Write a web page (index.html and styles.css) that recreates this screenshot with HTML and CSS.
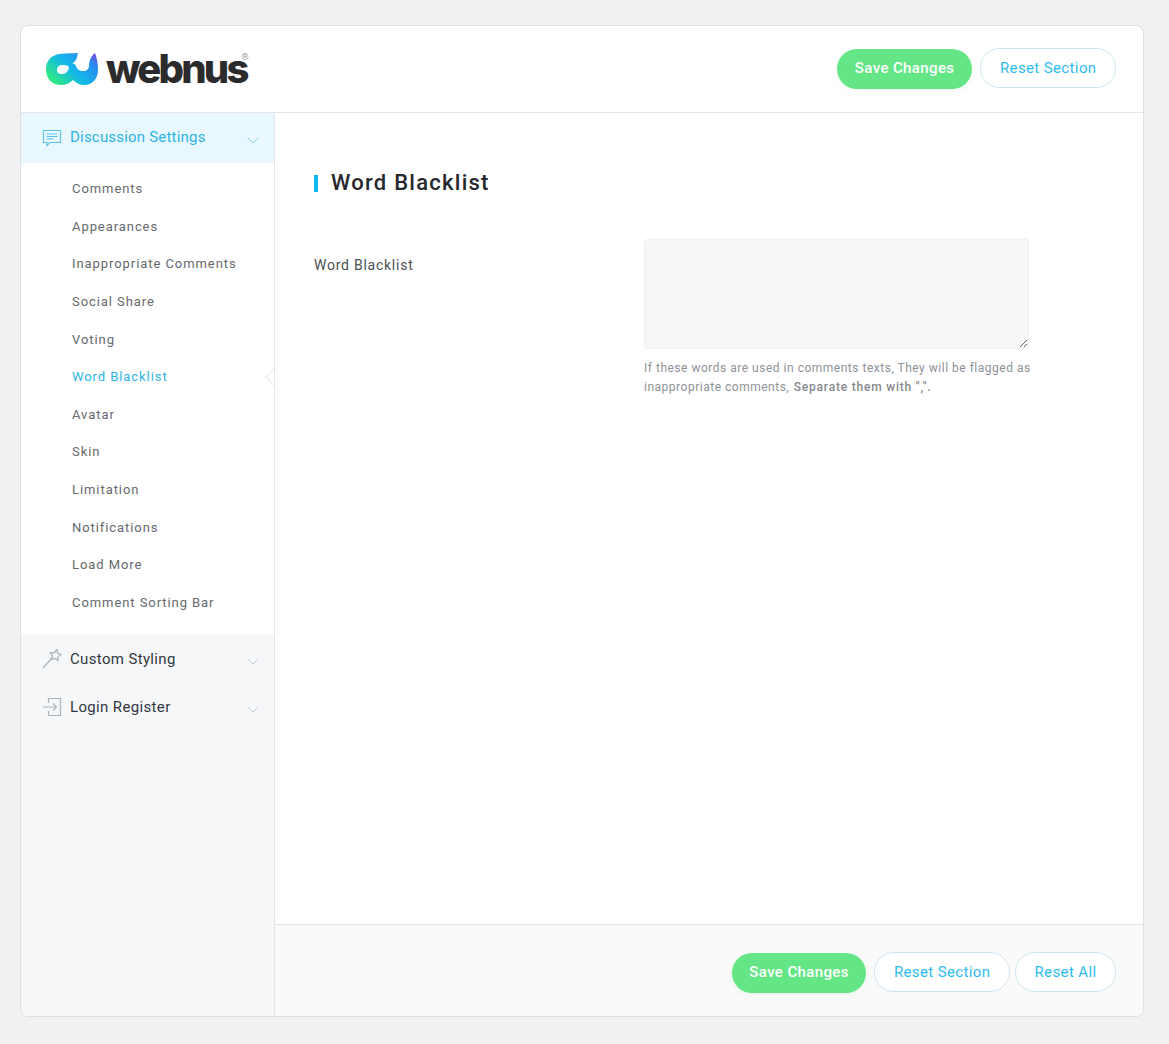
FILE: index.html
```html
<!DOCTYPE html>
<html lang="en">
<head>
    <meta charset="UTF-8">
    <meta name="viewport" content="width=device-width, initial-scale=1.0">
    <title>Word Blacklist</title>
    <link rel="stylesheet" href="styles.css">
</head>
<body>
    <div class="panel">
        <header class="panel-header">
            <div class="logo">
                <svg class="logo-mark" width="52" height="32" viewBox="0 0 52 32">
                    <defs>
                        <linearGradient id="markGrad" x1="0" y1="0.6" x2="0.96" y2="0">
                            <stop offset="0" stop-color="#2ee68a"/>
                            <stop offset="0.4" stop-color="#12b8e8"/>
                            <stop offset="0.8" stop-color="#2a8cf0"/>
                            <stop offset="1" stop-color="#7a3de8"/>
                        </linearGradient>
                    </defs>
                    <path fill="url(#markGrad)" fill-rule="evenodd" d="M32 0C24 .5 20 0 14 1 5 2 0 8 0 16c0 10 6 16 15 16 5 0 9-2 12-5 3 3 7 5 11 5 8 0 14-6 14-15 0-6-1-12-3-17-4 3-6 8-6 12s-2 6-6 6-6-2-7-5c-1-3-4-3-5-2 5-2 6-6 7-11zM17 12c-4 0-6 2-6 5s2 4 5 4c4 0 6-3 7-6 0-2-2-3-6-3z"/>
                </svg>
                <span class="logo-text">webnus</span><span class="logo-reg">®</span>
            </div>
            <div class="btn-row">
                <button class="btn btn-save">Save Changes</button>
                <button class="btn btn-reset">Reset Section</button>
            </div>
        </header>
        <div class="panel-body">
            <aside class="sidebar">
                <div class="menu-head active">
                    <svg class="menu-icon" width="20" height="20" viewBox="0 0 20 20" fill="none" stroke="#5cc3ea" stroke-width="1.2">
                        <path d="M1.500 2.500h17v12H8l-3 3v-3H1.500z"/>
                        <path d="M4.500 6h11M4.500 8.500h11M4.500 11h7"/>
                    </svg>
                    <span class="menu-title">Discussion Settings</span>
                    <svg class="chev" width="12" height="7" viewBox="0 0 12 7" fill="none" stroke="#8fd3ee"><path d="M.5.5 6 6 11.500.5"/></svg>
                </div>
                <ul class="submenu">
                    <li>Comments</li>
                    <li>Appearances</li>
                    <li>Inappropriate Comments</li>
                    <li>Social Share</li>
                    <li>Voting</li>
                    <li class="current">Word Blacklist</li>
                    <li>Avatar</li>
                    <li>Skin</li>
                    <li>Limitation</li>
                    <li>Notifications</li>
                    <li>Load More</li>
                    <li>Comment Sorting Bar</li>
                </ul>
                <div class="menu-head">
                    <svg class="menu-icon" width="20" height="20" viewBox="0 0 20 20" fill="none" stroke="#a8b1bc" stroke-width="1.2">
                        <path d="M1 19 10 9"/>
                        <path d="M15 .5l.5 3.500L19 5.500l-3 2v4l-3-2-3.500 1 1-3.500-2-3.500L12 4z"/>
                    </svg>
                    <span class="menu-title">Custom Styling</span>
                    <svg class="chev" width="12" height="7" viewBox="0 0 12 7" fill="none" stroke="#c9ced4"><path d="M.5.5 6 6 11.500.5"/></svg>
                </div>
                <div class="menu-head">
                    <svg class="menu-icon" width="20" height="20" viewBox="0 0 20 20" fill="none" stroke="#a8b4c2" stroke-width="1.2">
                        <path d="M6.500 6V1.500h12v17h-12V14"/>
                        <path d="M1 10h14M11 6.500 14.500 10 11 13.500"/>
                    </svg>
                    <span class="menu-title">Login Register</span>
                    <svg class="chev" width="12" height="7" viewBox="0 0 12 7" fill="none" stroke="#c9ced4"><path d="M.5.5 6 6 11.500.5"/></svg>
                </div>
            </aside>
            <main class="content">
                <section class="section">
                    <h2 class="section-title">Word Blacklist</h2>
                    <div class="field">
                        <label class="field-label">Word Blacklist</label>
                        <div class="field-control">
                            <textarea class="field-input"></textarea>
                            <p class="field-desc">If these words are used in comments texts, They will be flagged as inappropriate comments, <strong>Separate them with ",".</strong></p>
                        </div>
                    </div>
                </section>
                <footer class="panel-footer">
                    <button class="btn btn-save">Save Changes</button>
                    <button class="btn btn-reset">Reset Section</button>
                    <button class="btn btn-reset">Reset All</button>
                </footer>
            </main>
        </div>
    </div>
</body>
</html>
```

FILE: styles.css
```css
* {
    box-sizing: border-box;
}
body {
    margin: 0;
    padding: 25px 25px 27px 20px;
    background-color: #f1f1f1;
    font-family: Roboto, "Liberation Sans", sans-serif;
}
.panel {
    height: 992px;
    display: flex;
    flex-direction: column;
    background-color: #fff;
    border: 1px solid #dcdfe3;
    border-radius: 8px;
    overflow: hidden;
}
.panel-header {
    height: 87px;
    flex: none;
    display: flex;
    align-items: center;
    justify-content: space-between;
    padding: 0 27px 0 25px;
    border-bottom: 1px solid #e3e5e8;
}
.logo {
    display: flex;
    align-items: center;
    position: relative;
}
.logo-mark {
    margin-right: 8px;
}
.logo-text {
    font-family: Inter, sans-serif;
    font-size: 40px;
    font-weight: 800;
    letter-spacing: -2.8px;
    color: #2b2b2d;
    line-height: 32px;
}
.logo-reg {
    position: absolute;
    top: -2px;
    right: -2px;
    font-size: 9px;
    line-height: 12px;
    color: #999;
}
.btn-row {
    display: flex;
    align-items: center;
    gap: 8px;
}
.btn {
    height: 40px;
    padding: 0 18.5px;
    border-radius: 20px;
    font-family: Roboto, sans-serif;
    font-size: 15px;
    letter-spacing: 0.38px;
}
.btn-save {
    background-color: #64e686;
    border: none;
    color: #fff;
    font-weight: 500;
    padding: 0 18px 2px;
    box-shadow: 0 2px 6px rgba(100, 230, 134, 0.1);
}
.btn-reset {
    margin-bottom: 2px;
    background-color: #fff;
    border: 1px solid #cfe3ef;
    color: #2dbcf0;
}
.panel-body {
    flex: 1;
    display: flex;
    min-height: 0;
}
.sidebar {
    width: 254px;
    flex: none;
    background-color: #f6f7f9;
    border-right: 1px solid #e3e5e8;
}
.menu-head {
    height: 48px;
    display: flex;
    align-items: center;
    padding: 2px 15px 0 21px;
    color: #33383f;
}
.menu-head.active {
    height: 50px;
    padding-top: 0;
    background-color: #e9f8fe;
    color: #2cb5e5;
}
.menu-head.active .menu-title {
    margin-bottom: 2px;
    letter-spacing: 0.2px;
}
.menu-icon {
    flex: none;
    margin-right: 8px;
}
.menu-title {
    flex: 1;
    font-size: 15px;
    font-weight: 400;
    letter-spacing: 0.35px;
}
.chev {
    flex: none;
    margin-top: 4px;
}
.submenu {
    list-style: none;
    margin: 0;
    padding: 7.2px 0 12px;
    background-color: #fff;
    height: 471px;
    overflow: hidden;
}
.submenu li {
    position: relative;
    height: 37.6px;
    line-height: 37.6px;
    padding-left: 51px;
    font-size: 13px;
    letter-spacing: 0.93px;
    color: #65696f;
}
.submenu li.current {
    color: #2cb5e5;
}
.submenu li.current::after {
    content: "";
    position: absolute;
    right: -7.5px;
    top: 12.3px;
    width: 13px;
    height: 13px;
    background-color: #fff;
    border-left: 1px solid #ececec;
    border-bottom: 1px solid #ececec;
    transform: rotate(45deg);
}
.content {
    flex: 1;
    display: flex;
    flex-direction: column;
    min-width: 0;
}
.section {
    flex: 1;
    padding: 62px 39px 0;
}
.section-title {
    margin: 0 0 47px;
    padding: 0 0 2px 13px;
    border-left: 4px solid #0fb9ea;
    font-size: 22px;
    line-height: 15px;
    font-weight: 500;
    letter-spacing: 1.25px;
    color: #25282c;
}
.field {
    display: flex;
}
.field-label {
    width: 330px;
    flex: none;
    padding-top: 17px;
    font-size: 14px;
    line-height: 18px;
    letter-spacing: 0.75px;
    color: #4a4f56;
}
.field-control {
    width: 387px;
}
.field-input {
    display: block;
    width: 385px;
    height: 110px;
    background-color: #f6f7f9;
    border: 1px solid #eef0f2;
    border-radius: 3px;
}
.field-desc {
    margin: 10px 0 0;
    font-size: 12px;
    line-height: 19px;
    letter-spacing: 0.51px;
    color: #8d9298;
}
.field-desc strong {
    margin-left: 1px;
    font-weight: 500;
    letter-spacing: 0.8px;
    color: #85898e;
}
.panel-footer {
    height: 92px;
    flex: none;
    display: flex;
    align-items: center;
    justify-content: flex-end;
    gap: 5px;
    padding: 5px 27px 0 0;
    background-color: #fafafa;
    border-top: 1px solid #e3e5e8;
}
.panel-footer .btn-save {
    margin-right: 3px;
    padding: 0 17.5px 2px;
}
```
